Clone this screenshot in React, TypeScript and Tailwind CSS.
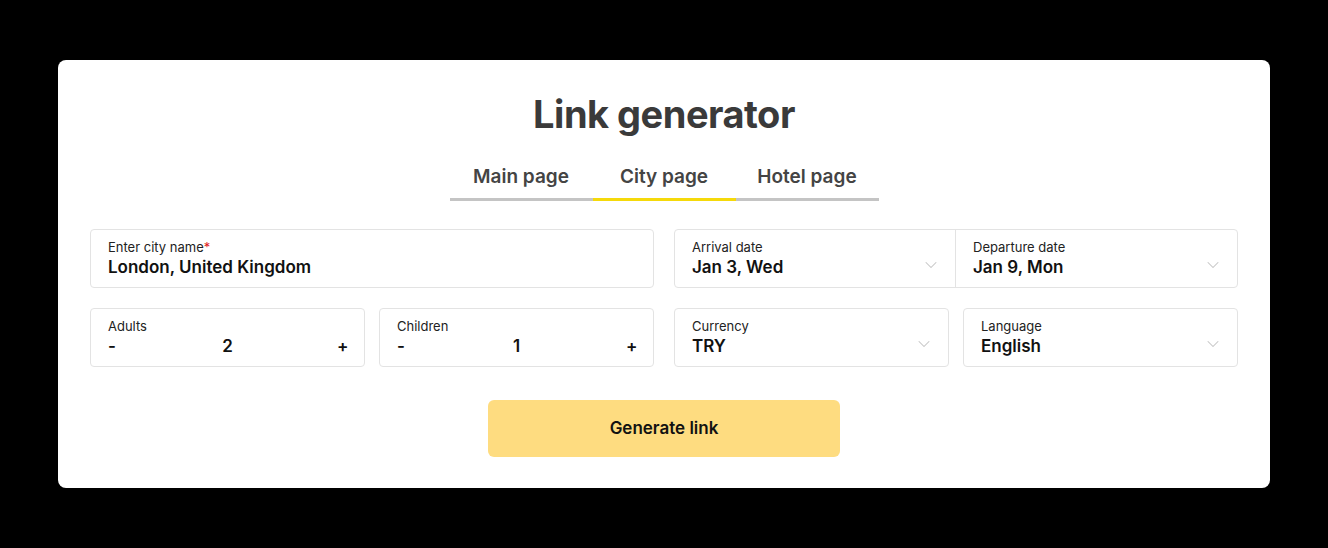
import { ChevronDown } from "lucide-react";

const tabs = ["Main page", "City page", "Hotel page"];

function Field({
  label,
  value,
  required,
  select,
  inner,
  className = "",
}: {
  label: string;
  value: string;
  required?: boolean;
  select?: boolean;
  inner?: boolean;
  className?: string;
}) {
  return (
    <div
      className={`flex items-center pl-[17px] pr-[14px] ${inner ? "h-[57px]" : "h-[59px]"} ${className}`}
    >
      <div className="flex-1 flex flex-col">
        <span className="text-[13px] leading-[16px] text-[#222]">
          {label}
          {required && <span className="text-[#e02020]">*</span>}
        </span>
        <span className="text-[17px] leading-[24px] font-semibold text-[#111]">{value}</span>
      </div>
      {select && <ChevronDown className="w-[20px] h-[20px] text-[#c4c4c4] mt-[12px]" strokeWidth={1.25} />}
    </div>
  );
}

function Counter({ label, value }: { label: string; value: number }) {
  return (
    <div className="flex flex-col justify-center h-[59px] px-[17px] border border-[#e3e3e3] rounded-[4px]">
      <span className="text-[13px] leading-[16px] text-[#222]">{label}</span>
      <div className="flex items-center justify-between text-[17px] leading-[24px] font-semibold text-[#111]">
        <span className="w-[10px]">-</span>
        <span>{value}</span>
        <span className="w-[10px] text-right">+</span>
      </div>
    </div>
  );
}

export default function App() {
  return (
    <div
      className="w-[1328px] h-[548px] bg-black pt-[60px] px-[58px]"
      style={{ fontFamily: "Inter, 'Liberation Sans', sans-serif" }}
    >
      <div className="bg-white rounded-[8px] h-[428px] px-[32px] pt-[30px] flex flex-col">
        <h1 className="text-center text-[38px] leading-[48px] font-bold text-[#3a3a3a] tracking-[-0.5px]">
          Link generator
        </h1>
        <div className="flex justify-center mt-[26px]">
          {tabs.map((t, i) => (
            <div
              key={t}
              className={`w-[143px] h-[37px] flex items-start justify-center text-[19px] leading-[26px] font-semibold text-[#444] border-b-[3px] ${
                i === 1 ? "border-[#f5d90a]" : "border-[#c4c4c4]"
              }`}
            >
              {t}
            </div>
          ))}
        </div>

        <div className="grid grid-cols-2 gap-x-[20px] gap-y-[20px] mt-[28px]">
          <Field
            label="Enter city name"
            value="London, United Kingdom"
            required
            className="border border-[#e3e3e3] rounded-[4px]"
          />
          <div className="grid grid-cols-2 border border-[#e3e3e3] rounded-[4px]">
            <Field label="Arrival date" value="Jan 3, Wed" select inner className="border-r border-[#e3e3e3]" />
            <Field label="Departure date" value="Jan 9, Mon" select inner />
          </div>
          <div className="grid grid-cols-2 gap-[14px]">
            <Counter label="Adults" value={2} />
            <Counter label="Children" value={1} />
          </div>
          <div className="grid grid-cols-2 gap-[14px]">
            <Field label="Currency" value="TRY" select className="border border-[#e3e3e3] rounded-[4px]" />
            <Field label="Language" value="English" select className="border border-[#e3e3e3] rounded-[4px]" />
          </div>
        </div>

        <div className="flex justify-center mt-[33px]">
          <button className="w-[352px] h-[57px] rounded-[6px] bg-[#fedc80] text-[17px] font-semibold text-[#111]">
            Generate link
          </button>
        </div>
      </div>
    </div>
  );
}
